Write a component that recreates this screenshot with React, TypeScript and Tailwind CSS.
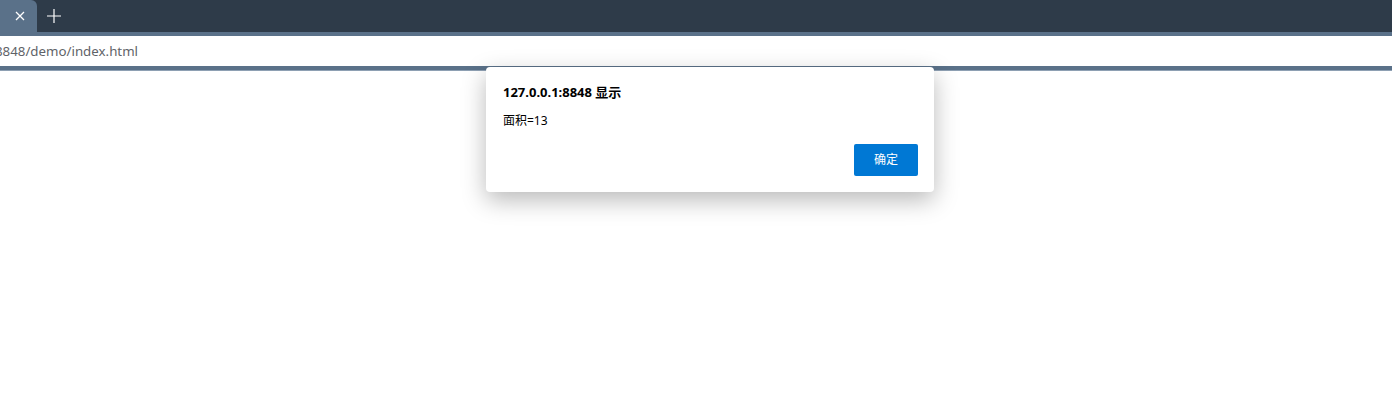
import React from 'react'

const font = { fontFamily: '"Segoe UI", "Noto Sans", "Noto Sans CJK SC", sans-serif' }

export default function App() {
  return (
    <div className="relative w-[1392px] h-[405px] bg-white overflow-hidden" style={font}>
      {/* tab strip */}
      <div className="flex h-[32px] bg-[#2e3b49]">
        <div className="flex w-[37px] items-center justify-center rounded-tr-[6px] bg-[#5a7189] text-white">
          <svg width="10" height="10" viewBox="0 0 10 10" className="ml-[3px]">
            <path d="M1 1L9 9M9 1L1 9" stroke="#fff" strokeWidth="1.3" />
          </svg>
        </div>
        <div className="flex w-[34px] items-center justify-center">
          <svg width="14" height="14" viewBox="0 0 14 14">
            <path d="M7 0V14M0 7H14" stroke="#fff" strokeWidth="1.2" />
          </svg>
        </div>
      </div>
      <div className="h-[4px] bg-[#5a7189]" />
      {/* address bar */}
      <div className="flex h-[30px] items-center overflow-hidden bg-white pt-[2px]">
        <span className="ml-[-5px] whitespace-nowrap text-[13.3px] text-[#5f6368]">
          8848/demo/index.html
        </span>
      </div>
      <div className="h-[4px] bg-[#5a7189]" />
      <div className="h-[1px] bg-[#8ea0b3]" />

      {/* alert dialog */}
      <div className="absolute left-[486px] top-[67px] w-[448px] h-[125px] rounded-[4px] bg-white shadow-[0_8px_24px_rgba(0,0,0,0.28)]">
        <div className="px-[17px] pt-[15px]">
          <div className="text-[13px] font-bold leading-[20px] text-black">127.0.0.1:8848 显示</div>
          <div className="mt-[10px] text-[12px] leading-[18px] text-black">面积=13</div>
        </div>
        <div className="mt-[14px] flex justify-end pr-[16px]">
          <button className="h-[32px] w-[64px] rounded-[2px] bg-[#0078d4] text-[12px] text-white">确定</button>
        </div>
      </div>
    </div>
  )
}
